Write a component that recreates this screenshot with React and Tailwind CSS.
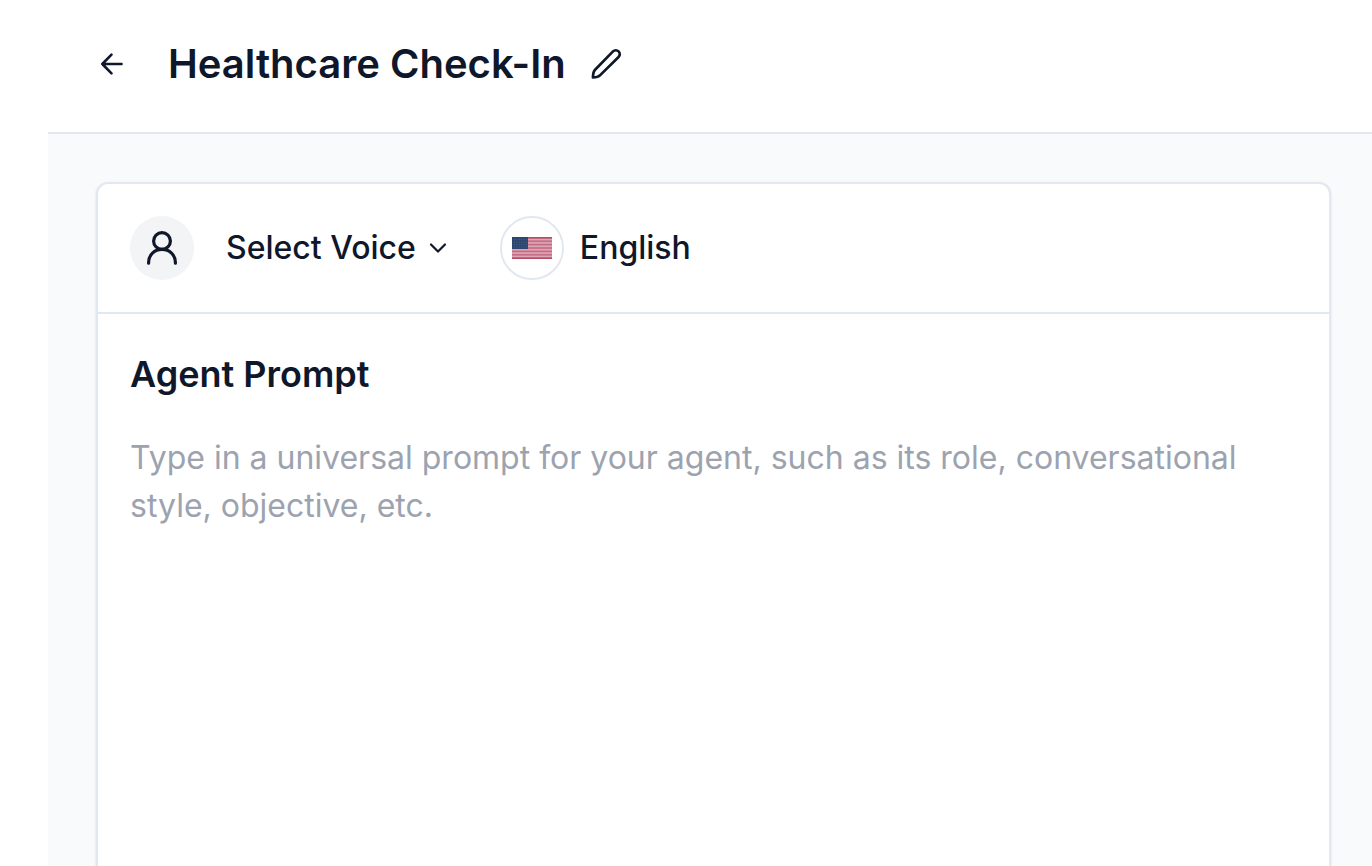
import React from "react";

function ArrowLeftIcon() {
  return (
    <svg className="size-8" viewBox="0 0 32 32" fill="none" stroke="currentColor" strokeWidth="2.6" strokeLinecap="round" strokeLinejoin="round" aria-hidden="true">
      <path d="M15.500 6.700 6.300 16l9.200 9.300M6.300 16h19.200" />
    </svg>
  );
}

function PencilIcon() {
  return (
    <svg className="size-10" viewBox="0 0 40 40" fill="none" stroke="currentColor" strokeWidth="2.7" strokeLinecap="round" strokeLinejoin="round" aria-hidden="true">
      <path d="M27 7.400a3.900 3.900 0 0 1 5.600 5.600L14.200 31.100c-1.700 1.700-4.900 2.300-7.300 2.400.1-2.700.5-6 2.200-7.700z" />
    </svg>
  );
}

function PersonIcon() {
  return (
    <svg className="size-10" viewBox="0 0 40 40" fill="none" stroke="currentColor" strokeWidth="3.200" strokeLinecap="round" strokeLinejoin="round" aria-hidden="true">
      <circle cx="20" cy="13" r="8.4" />
      <path d="M6.600 35.200v-.7C6.600 27 12.500 21.400 20 21.400S33.400 27 33.400 34.500v.7" />
    </svg>
  );
}

function ChevronIcon() {
  return (
    <svg className="size-7" viewBox="0 0 28 28" fill="none" stroke="currentColor" strokeWidth="2.2" strokeLinecap="round" strokeLinejoin="round" aria-hidden="true">
      <path d="m7 10.500 7 7 7-7" />
    </svg>
  );
}

function UsFlag() {
  return (
    <svg className="h-[22px] w-10" viewBox="0 0 40 22" preserveAspectRatio="none" role="img" aria-label="United States">
      <rect width="40" height="22" fill="#dba6b6" />
      {[0, 2, 4, 6, 8, 10, 12].map((i) => (
        <rect key={i} y={(i * 22) / 13} width="40" height={22 / 13} fill={i === 0 || i === 12 ? "#b84a66" : "#c66c85"} />
      ))}
      <rect width="16" height="12" fill="#2c4770" />
      {[2.5, 5, 7.5, 10].map((y) => (
        <path key={y} d={`M2 ${y}h13`} stroke="#fff" strokeOpacity="0.14" strokeWidth="1" strokeDasharray="1 1.400" />
      ))}
    </svg>
  );
}

export default function App() {
  return (
    <div className="flex h-screen flex-col overflow-hidden bg-white pl-12 font-['Inter',sans-serif] text-[#0f172a]">
      <header className="flex shrink-0 items-center border-b-2 border-slate-200 px-12 pt-8 pb-9">
        <button type="button" aria-label="Back" className="mr-10">
          <ArrowLeftIcon />
        </button>
        <h1 className="text-[40px] leading-[64px] font-semibold">Healthcare Check-In</h1>
        <button type="button" aria-label="Edit name" className="ml-5">
          <PencilIcon />
        </button>
      </header>
      <main className="flex min-h-0 flex-1 flex-col bg-slate-50 pt-12 pr-[41px] pl-12">
        <section className="flex flex-1 flex-col rounded-t-xl border-2 border-b-0 border-slate-200 bg-white shadow-sm">
          <div className="flex items-center border-b-2 border-slate-200 p-8">
            <span className="flex size-16 items-center justify-center rounded-full bg-gray-100">
              <PersonIcon />
            </span>
            <button type="button" className="ml-8 flex items-center gap-2 text-[32px] leading-[48px] font-medium">
              Select Voice
              <ChevronIcon />
            </button>
            <button type="button" className="ml-12 flex items-center gap-4 text-[32px] leading-[48px] font-medium">
              <span className="flex size-16 items-center justify-center rounded-full border-2 border-slate-200 bg-white">
                <UsFlag />
              </span>
              English
            </button>
          </div>
          <div className="flex flex-1 flex-col px-8 pt-8">
            <label htmlFor="agent-prompt" className="text-[36px] leading-[56px] font-semibold">
              Agent Prompt
            </label>
            <textarea
              id="agent-prompt"
              placeholder="Type in a universal prompt for your agent, such as its role, conversational style, objective, etc."
              className="mt-8 w-full flex-1 resize-none text-[32px] leading-[48px] outline-none placeholder:text-[#9ca3af]"
            />
          </div>
        </section>
      </main>
    </div>
  );
}
